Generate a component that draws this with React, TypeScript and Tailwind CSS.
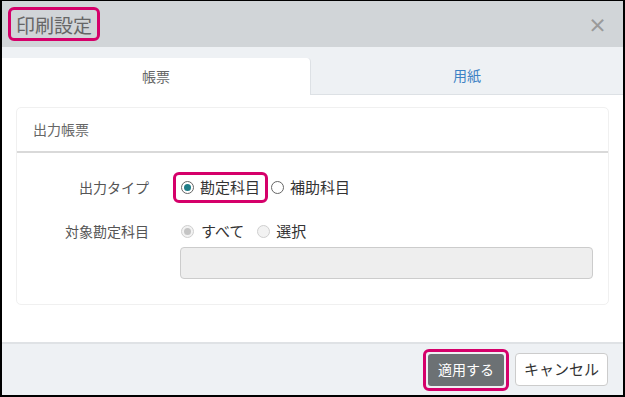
import React from "react";

const font = { fontFamily: '"Noto Sans CJK JP", "Noto Sans", sans-serif' };

function Radio({ checked, disabled }: { checked?: boolean; disabled?: boolean }) {
  return (
    <span
      className={`inline-flex items-center justify-center w-[13px] h-[13px] rounded-full border ${
        disabled ? "border-[#cfcfcf] bg-[#f2f2f2]" : "border-[#666] bg-white"
      }`}
    >
      {checked && (
        <span className={`w-[7px] h-[7px] rounded-full ${disabled ? "bg-[#c4c4c4]" : "bg-[#1e7c87]"}`} />
      )}
    </span>
  );
}

export default function App() {
  return (
    <div
      style={font}
      className="w-[625px] h-[397px] flex flex-col border-black border-t border-l-2 border-r-2 border-b-2 bg-white overflow-hidden"
    >
      {/* header */}
      <div className="h-[46px] bg-[#d1d5d8] flex items-center justify-between pl-[6px] pr-[16px]">
        <span className="border-[3px] border-[#d5006a] rounded-[6px] h-[34px] px-[5px] flex items-center text-[19px] text-[#666] leading-none">
          印刷設定
        </span>
        <span className="text-[#9a9a9a] text-[19px] font-bold leading-none">×</span>
      </div>

      {/* tabs */}
      <div className="h-[48px] bg-[#eef1f4] flex items-end border-b border-[#dde1e5]">
        <div className="w-[309px] h-[37px] bg-white rounded-tr-[4px] border-r border-[#dde1e5] flex items-center justify-center text-[14px] text-[#666] -mb-px">
          帳票
        </div>
        <div className="flex-1 h-[37px] flex items-center justify-center text-[14px] text-[#3d82c4]">
          用紙
        </div>
      </div>

      {/* content */}
      <div className="flex-1 bg-white pt-[12px] px-[14px]">
        <div className="h-[198px] border border-[#f0f0f0] rounded-[5px] flex flex-col">
          <div className="h-[45px] flex items-center pl-[16px] border-b-2 border-[#d9d9d9] text-[14px] text-[#666]">
            出力帳票
          </div>
          <div className="flex flex-col pt-[18px]">
            <div className="flex items-center h-[32px]">
              <span className="w-[132px] text-right text-[14px] text-[#555]">出力タイプ</span>
              <div className="ml-[24px] flex items-center">
                <span className="flex items-center gap-[6px] border-[3px] border-[#d5006a] rounded-[6px] h-[31px] px-[5px] text-[15px] text-[#333]">
                  <Radio checked />
                  勘定科目
                </span>
                <span className="flex items-center gap-[6px] ml-[3px] text-[15px] text-[#333]">
                  <Radio />
                  補助科目
                </span>
              </div>
            </div>
            <div className="flex items-center h-[32px] mt-[12px]">
              <span className="w-[132px] text-right text-[14px] text-[#555]">対象勘定科目</span>
              <div className="ml-[32px] flex items-center text-[15px] text-[#333]">
                <span className="flex items-center gap-[7px]">
                  <Radio checked disabled />
                  すべて
                </span>
                <span className="flex items-center gap-[6px] ml-[13px]">
                  <Radio disabled />
                  選択
                </span>
              </div>
            </div>
            <div className="ml-[163px] mr-[15px] h-[32px] bg-[#eeeeee] border border-[#cccccc] rounded-[4px]" />
          </div>
        </div>
      </div>

      {/* footer */}
      <div className="h-[53px] bg-[#eef1f4] border-t-2 border-[#dfe2e5] flex items-center justify-end pr-[15px] gap-[6px]">
        <span className="border-[3px] border-[#d5006a] rounded-[6px] p-[2px] flex">
          <span className="h-[32px] px-[10px] bg-[#6c7174] rounded-[3px] flex items-center text-[14px] text-white">
            適用する
          </span>
        </span>
        <span className="h-[33px] w-[93px] bg-white border border-[#cccccc] rounded-[4px] flex items-center justify-center text-[15px] text-[#333]">
          キャンセル
        </span>
      </div>
    </div>
  );
}
